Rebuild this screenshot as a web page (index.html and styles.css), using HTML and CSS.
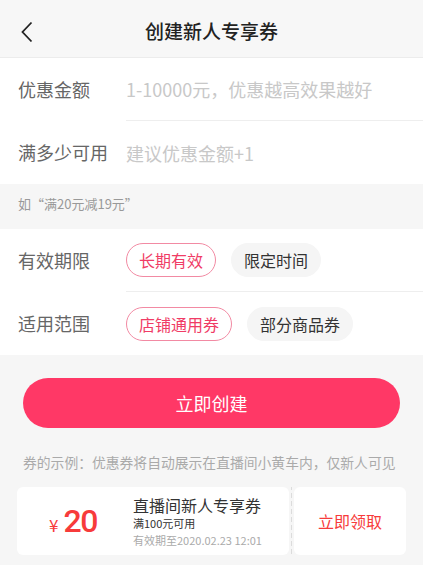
FILE: index.html
```html
<!DOCTYPE html>
<html>
<head>
  <meta charset="utf-8">
  <title>创建新人专享券</title>
  <link rel="stylesheet" href="styles.css">
</head>
<body>
  <div class="header">
    <svg class="back" width="12" height="22" viewBox="0 0 12 22">
      <path d="M10.5 1.5 L1.5 11 L10.5 20.5" fill="none" stroke="#222" stroke-width="1.8"/>
    </svg>
    <div class="title">创建新人专享券</div>
  </div>

  <div class="group">
    <div class="row">
      <div class="label">优惠金额</div>
      <div class="field placeholder">1-10000元，优惠越高效果越好</div>
    </div>
    <div class="row">
      <div class="label">满多少可用</div>
      <div class="field placeholder">建议优惠金额+1</div>
    </div>
  </div>

  <div class="hint">如“满20元减19元”</div>

  <div class="group">
    <div class="row">
      <div class="label">有效期限</div>
      <div class="field chips">
        <span class="chip active">长期有效</span>
        <span class="chip">限定时间</span>
      </div>
    </div>
    <div class="row">
      <div class="label">适用范围</div>
      <div class="field chips">
        <span class="chip active">店铺通用券</span>
        <span class="chip">部分商品券</span>
      </div>
    </div>
  </div>

  <div class="actions">
    <button class="btn-create">立即创建</button>
    <p class="example">券的示例：优惠券将自动展示在直播间小黄车内，仅新人可见</p>

    <div class="coupon">
      <div class="coupon-main">
        <div class="price"><span class="yen">¥</span><span class="num">20</span></div>
        <div class="info">
          <div class="name">直播间新人专享券</div>
          <div class="cond">满100元可用</div>
          <div class="date">有效期至2020.02.23 12:01</div>
        </div>
      </div>
      <div class="coupon-sep"></div>
      <div class="coupon-side">立即领取</div>
    </div>
  </div>
</body>
</html>
```

FILE: styles.css
```css
* {
  box-sizing: border-box;
}
body {
  margin: 0;
  font-family: "Noto Sans CJK SC", "Noto Sans", sans-serif;
  background-color: #f6f6f6;
  color: #333;
}
.header {
  height: 58px;
  padding-top: 3px;
  background-color: #f7f7f7;
  border-bottom: 1px solid #ececec;
  display: flex;
  align-items: center;
  justify-content: center;
  position: relative;
}
.back {
  position: absolute;
  left: 21px;
  top: 21px;
}
.title {
  font-size: 19px;
  font-weight: 500;
  color: #222;
}
.group {
  background-color: white;
}
.row {
  display: flex;
  align-items: center;
  height: 62px;
}
.row + .row .field {
  border-top: 1px solid #eeeeee;
}
.label {
  width: 126px;
  padding-left: 18px;
  font-size: 18px;
  color: #666;
  flex-shrink: 0;
}
.field {
  flex: 1;
  height: 100%;
  display: flex;
  align-items: center;
  font-size: 18px;
}
.placeholder {
  color: #c8c8c8;
}
.row + .row {
  height: 64px;
}
.hint {
  height: 45px;
  padding: 10px 18px 0;
  font-size: 13px;
  color: #999;
}
.chips {
  gap: 15px;
}
.chip {
  display: inline-block;
  height: 34px;
  line-height: 32px;
  padding: 0 12px;
  border-radius: 17px;
  border: 1px solid #f5f5f5;
  background-color: #f5f5f5;
  font-size: 16px;
  color: #333;
}
.chip.active {
  background-color: white;
  border-color: #f28aa3;
  color: #f03c66;
}
.actions {
  padding: 23px 17px 20px;
}
.btn-create {
  display: block;
  width: 377px;
  height: 50px;
  margin: 0 auto;
  border: none;
  border-radius: 25px;
  background-color: #ff3866;
  color: white;
  font-family: inherit;
  font-size: 18px;
}
.example {
  margin: 24px 0 15px 6px;
  font-size: 13.8px;
  color: #aaa;
  white-space: nowrap;
}
.coupon {
  display: flex;
  height: 68px;
}
.coupon-main {
  flex: 1;
  display: flex;
  align-items: center;
  background-color: white;
  border-radius: 6px;
}
.price {
  width: 116px;
  padding-left: 32px;
  color: #f73b3b;
  display: flex;
  align-items: baseline;
}
.yen {
  font-size: 17px;
  margin-right: 5px;
}
.num {
  font-family: Roboto, sans-serif;
  font-size: 32px;
  font-weight: 500;
  letter-spacing: -1.5px;
}
.info {
  display: flex;
  flex-direction: column;
  padding-top: 3px;
}
.name {
  font-size: 16px;
  line-height: 19px;
  color: #333;
}
.cond {
  font-size: 11px;
  line-height: 17px;
  color: #333;
}
.date {
  font-size: 11px;
  line-height: 17px;
  color: #aaa;
}
.coupon-sep {
  width: 5px;
  background: linear-gradient(#dcdcdc 60%, transparent 60%) center / 1px 8px repeat-y;
}
.coupon-side {
  width: 112px;
  display: flex;
  align-items: center;
  justify-content: center;
  background-color: white;
  border-radius: 6px;
  font-size: 16px;
  color: #f73b3b;
}
```
